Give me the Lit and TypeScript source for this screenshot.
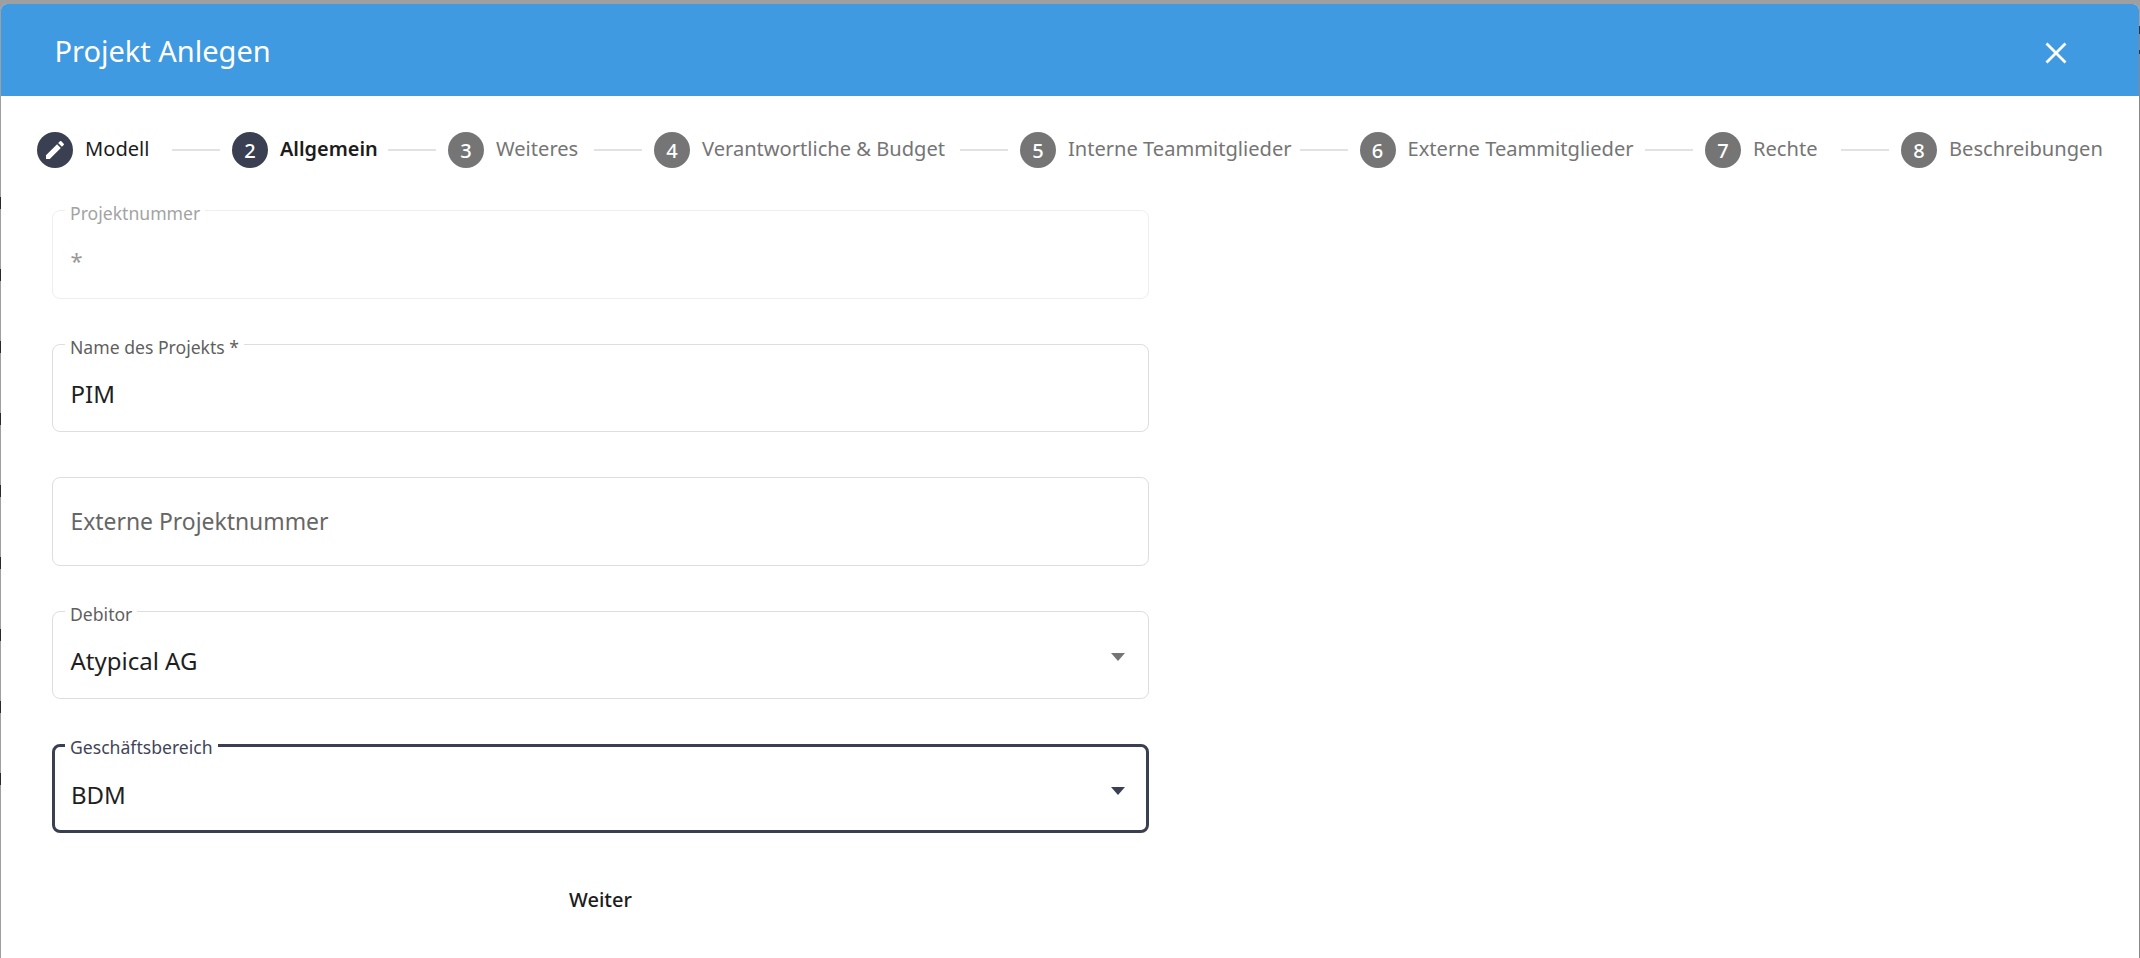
import { LitElement, html, css } from "lit";
import { customElement } from "lit/decorators.js";

const steps = [
  { n: "", label: "Modell", state: "done", w: 75 },
  { n: "2", label: "Allgemein", state: "active", w: 96 },
  { n: "3", label: "Weiteres", state: "", w: 86 },
  { n: "4", label: "Verantwortliche & Budget", state: "", w: 246 },
  { n: "5", label: "Interne Teammitglieder", state: "", w: 219.5 },
  { n: "6", label: "Externe Teammitglieder", state: "", w: 225.5 },
  { n: "7", label: "Rechte", state: "", w: 76 },
  { n: "8", label: "Beschreibungen", state: "", w: 152 },
];

const fields = [
  { label: "Projektnummer", value: "*", kind: "disabled" },
  { label: "Name des Projekts *", value: "PIM", kind: "" },
  { label: "", value: "Externe Projektnummer", kind: "placeholder" },
  { label: "Debitor", value: "Atypical AG", kind: "select" },
  { label: "Geschäftsbereich", value: "BDM", kind: "select focus" },
];

@customElement("app-root")
export class AppRoot extends LitElement {
  static styles = css`
    :host {
      display: block;
      position: relative;
      height: 958px;
      background: #9f9f9f;
      padding: 4px 1px 0;
      box-sizing: border-box;
      overflow: hidden;
      font-family: "Noto Sans", "Lato", sans-serif;
    }
    .edge-left {
      position: absolute;
      left: 0;
      top: 197px;
      width: 1px;
      height: 592px;
      background: repeating-linear-gradient(#2a2a2a 0 12px, transparent 12px 72px);
    }
    .edge-right {
      position: absolute;
      right: 0;
      top: 0;
      bottom: 0;
      width: 1px;
      background: linear-gradient(
        #9f9f9f 0 26px, #333 26px 34px, #8a8a8a 34px 50px, #333 50px 54px, #8a8a8a 54px
      );
    }
    .dialog {
      height: 954px;
      background: #fff;
      border-radius: 6px 6px 0 0;
      overflow: hidden;
    }
    .head {
      height: 92px;
      background: #409ae1;
      display: flex;
      align-items: center;
      justify-content: space-between;
      padding: 0 71px 0 53.5px;
      color: #fff;
    }
    .title { font-size: 29px; font-weight: 400; }
    .close { width: 24px; height: 24px; display: block; margin-top: 6px; }
    .stepper {
      display: flex;
      align-items: center;
      height: 36px;
      margin-top: 36px;
      padding-left: 36px;
    }
    .step { display: flex; align-items: center; gap: 12px; color: #757575; font-size: 20.1px; white-space: nowrap; }
    .step.done, .step.active { color: #1c1c1c; }
    .step.active { font-weight: 600; font-size: 19.9px; }
    .label { display: block; line-height: 36px; margin-top: -2px; }
    .dot {
      width: 36px; height: 36px; border-radius: 50%;
      background: #757575; color: #fff;
      display: flex; align-items: center; justify-content: center;
      font-size: 20px; font-weight: 500;
      flex: none;
    }
    .done .dot, .active .dot { background: #3a4052; }
    .dot svg { width: 24px; height: 24px; fill: #fff; }
    .line { height: 2px; background: #e2e2e2; width: 48px; margin: 0 12px; flex: none; }
    .form {
      width: 1097px;
      margin: 42px 0 0 51px;
      display: flex;
      flex-direction: column;
      gap: 45px;
    }
    .field {
      position: relative;
      height: 88.5px;
      box-sizing: border-box;
      border: 1.5px solid #dedede;
      border-radius: 8px;
      display: flex;
      align-items: center;
      padding: 0 17.5px;
      font-size: 24px;
      color: #1f1f1f;
    }
    .field .val { padding-top: 12px; }
    .lab {
      position: absolute;
      left: 12px;
      top: -8px;
      padding: 0 5px;
      background: #fff;
      font-size: 17.6px;
      line-height: 20px;
      color: #5f5f5f;
    }
    .disabled { border-color: #eeeeee; }
    .disabled .lab { color: #a3a3a3; }
    .disabled .val { color: #999; font-size: 22px; }
    .placeholder .val { color: #666; padding-top: 0; font-size: 22.9px; }
    .focus { border: 3px solid #3a4052; }
    .focus .lab { color: #3f4557; left: 10px; top: -10.5px; }
    .focus.field { padding: 0 16px; }
    .arrow {
      position: absolute;
      right: 23px;
      top: 41px;
      width: 0; height: 0;
      border-left: 7.5px solid transparent;
      border-right: 7.5px solid transparent;
      border-top: 8px solid #757575;
    }
    .focus .arrow { border-top-color: #3a4052; right: 21.5px; top: 39.5px; }
    .actions { display: flex; justify-content: center; margin-top: 8px; }
    .next { font-size: 20px; font-weight: 500; color: #1c1c1c; }
  `;

  render() {
    return html`<div class="edge-left"></div><div class="edge-right"></div>
    <div class="dialog">
      <div class="head">
        <div class="title">Projekt Anlegen</div>
        <svg class="close" viewBox="0 0 24 24"><path d="M2.5 2.5 L21.5 21.5 M21.5 2.5 L2.5 21.5" stroke="#fff" stroke-width="2.8" fill="none"/></svg>
      </div>
      <div class="stepper">
        ${steps.map(
          (s, i) => html`
            ${i ? html`<div class="line"></div>` : ""}
            <div class="step ${s.state}">
              <div class="dot">
                ${s.n || html`<svg viewBox="0 0 24 24"><path d="M3 17.25V21h3.75L17.81 9.94l-3.75-3.75L3 17.25zM20.71 7.04a1 1 0 0 0 0-1.41l-2.34-2.34a1 1 0 0 0-1.41 0l-1.83 1.83 3.75 3.75 1.83-1.83z"/></svg>`}
              </div>
              <span class="label" style="width:${s.w}px">${s.label}</span>
            </div>
          `
        )}
      </div>
      <div class="form">
        ${fields.map(
          (f) => html`<div class="field ${f.kind}">
            ${f.label ? html`<span class="lab">${f.label}</span>` : ""}
            <span class="val">${f.value}</span>
            ${f.kind.includes("select") ? html`<span class="arrow"></span>` : ""}
          </div>`
        )}
        <div class="actions"><span class="next">Weiter</span></div>
      </div>
    </div>`;
  }
}
